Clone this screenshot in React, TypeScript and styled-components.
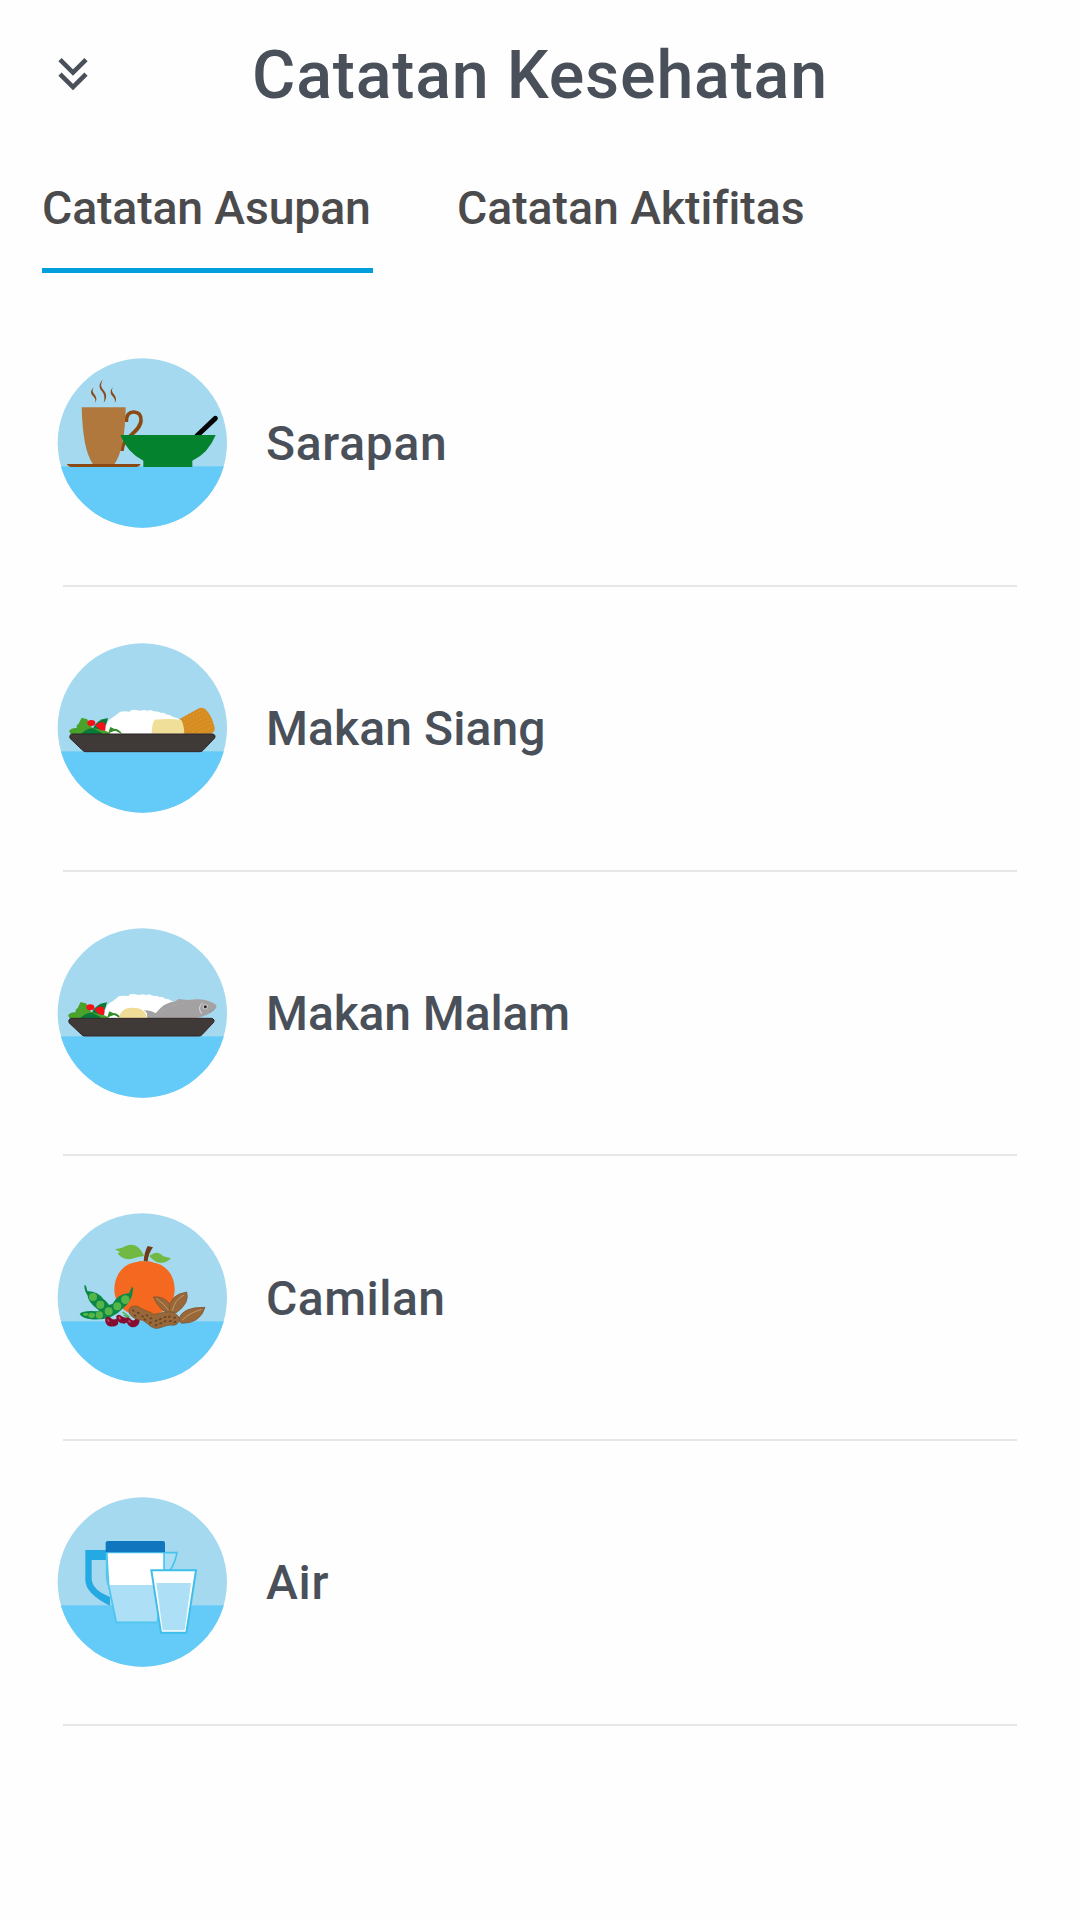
import React from "react";
import styled, { createGlobalStyle } from "styled-components";

const GlobalStyle = createGlobalStyle`
  * { box-sizing: border-box; }
  body { margin: 0; background: #fefefe; font-family: Roboto, "Noto Sans", sans-serif; }
`;

const Screen = styled.main`
  width: 1080px;
  min-height: 1920px;
  background: #fefefe;
  display: flex;
  flex-direction: column;
`;

const Header = styled.header`
  display: grid;
  grid-template-columns: 146px 1fr 146px;
  align-items: center;
  height: 150px;
`;

const CollapseButton = styled.button`
  border: 0;
  padding: 0 0 2px;
  background: none;
  justify-self: center;
  line-height: 0;
  color: #495059;
`;

const Title = styled.h1<{ $tracking: number }>`
  margin: 0;
  text-align: center;
  font-size: 66.4px;
  font-weight: 500;
  line-height: 78px;
  letter-spacing: ${(p) => p.$tracking}px;
  color: #495059;
  white-space: nowrap;
`;

const Tabs = styled.nav`
  display: flex;
  gap: 84px;
  height: 152px;
  padding: 0 42px;
`;

const Tab = styled.button<{ $active?: boolean; $tracking: number }>`
  border: 0;
  border-bottom: 5px solid ${(p) => (p.$active ? "#009fdb" : "transparent")};
  background: none;
  padding: 30px 0 0;
  height: 123px;
  width: ${(p) => (p.$active ? 331 : 348)}px;
  display: flex;
  align-items: flex-start;
  font: 500 46.4px/56px Roboto, sans-serif;
  letter-spacing: ${(p) => p.$tracking}px;
  color: #4b4b4d;
  white-space: nowrap;
`;

const List = styled.ul`
  list-style: none;
  margin: 0;
  padding: 0 63px;
`;

const Row = styled.li`
  display: flex;
  align-items: center;
  gap: 39px;
  height: 284.75px;
  border-bottom: 2px solid #e6e7e8;
`;

const Art = styled.svg`
  display: block;
  flex: none;
  width: 170px;
  height: 170px;
  margin-left: -6px;
`;

const Label = styled.span<{ $tracking: number }>`
  padding-top: 2px;
  font-size: 48px;
  font-weight: 500;
  line-height: 58px;
  letter-spacing: ${(p) => p.$tracking}px;
  color: #495059;
`;

function Scene({ id, top = 24, children }: { id: string; top?: number; children: React.ReactNode }) {
  return (
    <Art viewBox={`21 ${top} 510 510`} aria-hidden="true">
      <clipPath id={id}>
        <circle cx="277" cy={top + 255} r="254" />
      </clipPath>
      <g clipPath={`url(#${id})`}>
        <rect x="20" y={top - 2} width="514" height="516" fill="#a4d9ef" />
        <rect x="20" y={top + 325} width="514" height="190" fill="#64caf7" />
      </g>
      {children}
    </Art>
  );
}

function Breakfast() {
  return (
    <Scene id="breakfast">
      <g fill="#8a4a1c">
        <path d="M131 112C121 122 121 131 129 138C136 145 138 151 135 159C142 149 139 141 133 133C127 125 126 121 131 112Z" />
        <path d="M158 89C146 102 146 112 156 124C164 134 165 145 161 158C172 145 170 132 161 121C152 110 151 103 158 89Z" />
        <path d="M189 112C180 121 180 130 187 138C194 146 197 151 194 159C202 149 197 140 191 132C185 124 184 120 189 112Z" />
      </g>
      <path d="M229 216C228 194 239 185 252 186C267 187 274 197 273 212C272 235 246 252 232 265C220 277 217 287 216 303" fill="none" stroke="#8b4a13" strokeWidth="11" />
      <path d="M95 172H227Q225 298 193 343H129Q98 300 95 172Z" fill="#b1783e" />
      <path d="M50 342H272Q269 350 260 351H62Q55 349 50 342Z" fill="#8b4a13" />
      <path d="M440 258L496 205" stroke="#050505" strokeWidth="15" strokeLinecap="round" />
      <path d="M211 255H497Q475 310 427 332V351H280V332Q232 308 211 255Z" fill="#04822e" />
    </Scene>
  );
}

function RiceBed() {
  return (
    <>
      <path d="M165 296C166 277 172 258 181 252L193 244L203 236L211 230L227 229L239 230L243 225L255 224L269 227L282 225L292 227L302 225L311 229L325 230L331 233L340 233L349 238L359 240L370 246L383 250L398 261L401 296Z" fill="#fff" />
      <path d="M129 280Q139 253 174 249Q171 267 159 285L136 292Z" fill="#0b7a36" />
      <path d="M57 288Q64 278 80 279Q78 270 86 266Q90 257 95 248Q103 251 111 252L126 278L170 289L181 297H62Z" fill="#4aa22b" />
      <path d="M93 297Q109 280 128 280L153 292L157 297Z" fill="#087b38" />
      <ellipse cx="124" cy="264" rx="12" ry="9" fill="#f50f17" />
      <path d="M137 272Q144 260 162 262Q169 270 165 287Q150 288 137 272Z" fill="#f50f17" />
      <path d="M181 276L192 281Q207 281 216 296L204 292Q194 286 184 291L174 296Z" fill="#328c27" />
      <path d="M193 288Q204 288 207 296H181Z" fill="#fff" />
    </>
  );
}

function Tray() {
  return (
    <path d="M65 297H489Q499 301 494 309L459 346Q456 350 450 350H106Q102 350 98 346L60 310Q57 300 65 297Z" fill="#3f3938" stroke="#312625" strokeWidth="3" />
  );
}

function Lunch() {
  return (
    <Scene id="lunch">
      <RiceBed />
      <path d="M390 251L444 221Q457 215 468 224Q487 244 494 278Q496 290 481 296H400Z" fill="#d68c20" />
      <g fill="none" stroke="#e4a13b" strokeWidth="3" strokeDasharray="4 6">
        <path d="M402 254L457 225M403 265L468 232M406 277L475 242M410 288L481 253M426 290L486 263M446 292L489 274" />
      </g>
      <path d="M305 296Q306 264 314 254Q357 249 394 255Q402 270 403 296Z" fill="#efdf99" />
      <Tray />
    </Scene>
  );
}

function Dinner() {
  return (
    <Scene id="dinner">
      <g transform="translate(-3 -2)">
        <RiceBed />
      </g>
      <path d="M207 295C211 272 224 263 247 263C273 263 287 271 291 294Z" fill="#efdc97" />
      <path d="M281 271Q303 271 317 280Q342 247 376 244L386 237L411 240L440 238Q470 237 495 252Q506 260 491 271Q472 289 438 294H291Q295 278 281 271Z" fill="#a3a1a1" />
      <path d="M334 277Q368 248 435 246Q360 252 327 281" fill="#b1afaf" />
      <path d="M458 248Q440 264 456 282" fill="none" stroke="#dedede" strokeWidth="3" />
      <circle cx="466" cy="260" r="8" fill="#c5c3c3" />
      <circle cx="466" cy="260" r="4.5" fill="#292526" />
      <path d="M478 278L493 269" stroke="#898788" strokeWidth="2" />
      <g transform="translate(-3 -2)">
        <Tray />
      </g>
    </Scene>
  );
}

const NUT_PITS = [
  [250, 315], [265, 322], [255, 330], [278, 332], [291, 329], [285, 342], [303, 338], [301, 351],
  [318, 345], [318, 358], [331, 340], [332, 353], [345, 334], [345, 347], [358, 333], [361, 346], [374, 336], [375, 349],
];

function Snack() {
  return (
    <Scene id="snack" top={22}>
      <path d="M195 131Q214 130 227 121C250 110 271 122 282 151Q262 153 251 158C229 166 211 155 203 143L211 140Z" fill="#72b944" />
      <path d="M298 151C316 136 329 139 340 152L363 158C349 174 321 180 298 151Z" fill="#72b944" />
      <path d="M281 167Q283 139 293 121L309 125Q295 143 293 168Z" fill="#713a18" />
      <path d="M193 254C193 206 221 174 260 169Q278 163 287 169Q297 163 312 171C350 177 375 212 374 254C372 300 337 330 285 333C230 331 195 300 193 254Z" fill="#f4691f" />
      <g fill="#0b8746">
        <path d="M103 238L108 240L112 256Q145 258 160 280Q178 291 184 317L164 325Q115 295 113 270Q103 256 103 238Z" />
        <path d="M246 244L250 246L246 270Q239 291 219 308Q185 347 123 341Q94 337 89 324Q101 313 143 317Q164 300 187 295Q204 264 237 263Z" />
      </g>
      <path d="M218 319L238 334M221 328L241 340" stroke="#45af4a" strokeWidth="4" />
      <g fill="#55b549">
        <circle cx="129" cy="274" r="12" /><circle cx="151" cy="297" r="12" />
        <circle cx="226" cy="282" r="13" /><circle cx="202" cy="302" r="12" />
        <circle cx="176" cy="317" r="12" /><circle cx="148" cy="328" r="11" />
        <ellipse cx="125" cy="329" rx="10" ry="8" /><ellipse cx="107" cy="326" rx="8" ry="5" />
      </g>
      <g fill="#850d32">
        <path d="M166 338Q172 331 180 335Q188 345 199 339Q209 348 202 358Q190 366 174 360Q164 353 166 338Z" />
        <path d="M199 331Q208 323 215 332Q226 339 235 335Q241 349 223 354Q196 352 199 331Z" />
        <path d="M230 341Q237 333 244 342Q253 348 258 338Q268 335 269 347Q265 366 245 365Q228 358 230 341Z" />
      </g>
      <path d="M173 341L177 348M207 333L211 341M236 344L241 351" stroke="#c65373" strokeWidth="4" />
      <g fill="#98683b" stroke="#79502c" strokeWidth="2">
        <path d="M310 274Q340 270 362 297L372 325Q333 326 310 274Z" />
        <path d="M357 318Q355 267 410 259Q420 292 379 321L359 323Z" />
        <path d="M385 342Q397 303 465 305Q451 354 394 353Z" />
        <path d="M238 309C245 298 262 300 272 307C285 316 300 317 310 326C326 325 338 318 351 319C363 316 379 322 388 336C391 348 379 363 361 358C342 359 331 370 315 368C299 364 291 350 277 344C256 343 231 328 238 309Z" />
      </g>
      <g fill="none" stroke="#c69762" strokeWidth="3">
        <path d="M319 278Q343 295 357 315M367 316Q373 283 402 268M396 344Q421 319 454 312" />
      </g>
      <g fill="#60401f">
        {NUT_PITS.map(([x, y]) => (
          <ellipse key={`${x}-${y}`} cx={x} cy={y} rx="4.5" ry="2.5" transform={`rotate(${x < 300 ? 35 : -25} ${x} ${y})`} />
        ))}
      </g>
    </Scene>
  );
}

function Water() {
  return (
    <Scene id="water" top={21}>
      <path d="M106 180H169V210H125V265Q125 300 180 321V347Q106 311 106 269Z" fill="#24a9e2" />
      <path d="M342 188H381Q376 216 360 242H342Z" fill="#aadef5" stroke="#47c4ee" strokeWidth="5" />
      <path d="M170 187H342V240L319 397H199L176 286Z" fill="#fff" stroke="#55c8ef" strokeWidth="5" />
      <path d="M177 285H334L319 395H200Z" fill="#addff6" />
      <path d="M170 187V250Q170 277 177 290L199 397H319" fill="none" stroke="#50c6ef" strokeWidth="5" />
      <path d="M167 187V158Q167 153 173 153H339Q345 153 345 159V187Z" fill="#1076bd" />
      <path d="M304 241H438L409 428H333Z" fill="#fff" stroke="#3dbfea" strokeWidth="6" />
      <path d="M319 279H423L404 421H338Z" fill="#addff6" />
    </Scene>
  );
}

const MEALS = [
  { name: "Sarapan", tracking: 0.7, Picture: Breakfast },
  { name: "Makan Siang", tracking: 0.1, Picture: Lunch },
  { name: "Makan Malam", tracking: -0.1, Picture: Dinner },
  { name: "Camilan", tracking: 0.5, Picture: Snack },
  { name: "Air", tracking: 0.7, Picture: Water },
];

export default function App() {
  return (
    <>
      <GlobalStyle />
      <Screen>
        <Header>
          <CollapseButton aria-label="Tutup">
            <svg width="30" height="34" viewBox="0 0 30 34" fill="none" stroke="currentColor" strokeWidth="4.6">
              <path d="M2 2.6L15 15.6L28 2.6M2 17.1L15 30.1L28 17.1" />
            </svg>
          </CollapseButton>
          <Title $tracking={0.8}>Catatan Kesehatan</Title>
        </Header>
        <Tabs>
          <Tab $active $tracking={-0.15}>Catatan Asupan</Tab>
          <Tab $tracking={-0.05}>Catatan Aktifitas</Tab>
        </Tabs>
        <List>
          {MEALS.map(({ name, tracking, Picture }) => (
            <Row key={name}>
              <Picture />
              <Label $tracking={tracking}>{name}</Label>
            </Row>
          ))}
        </List>
      </Screen>
    </>
  );
}
